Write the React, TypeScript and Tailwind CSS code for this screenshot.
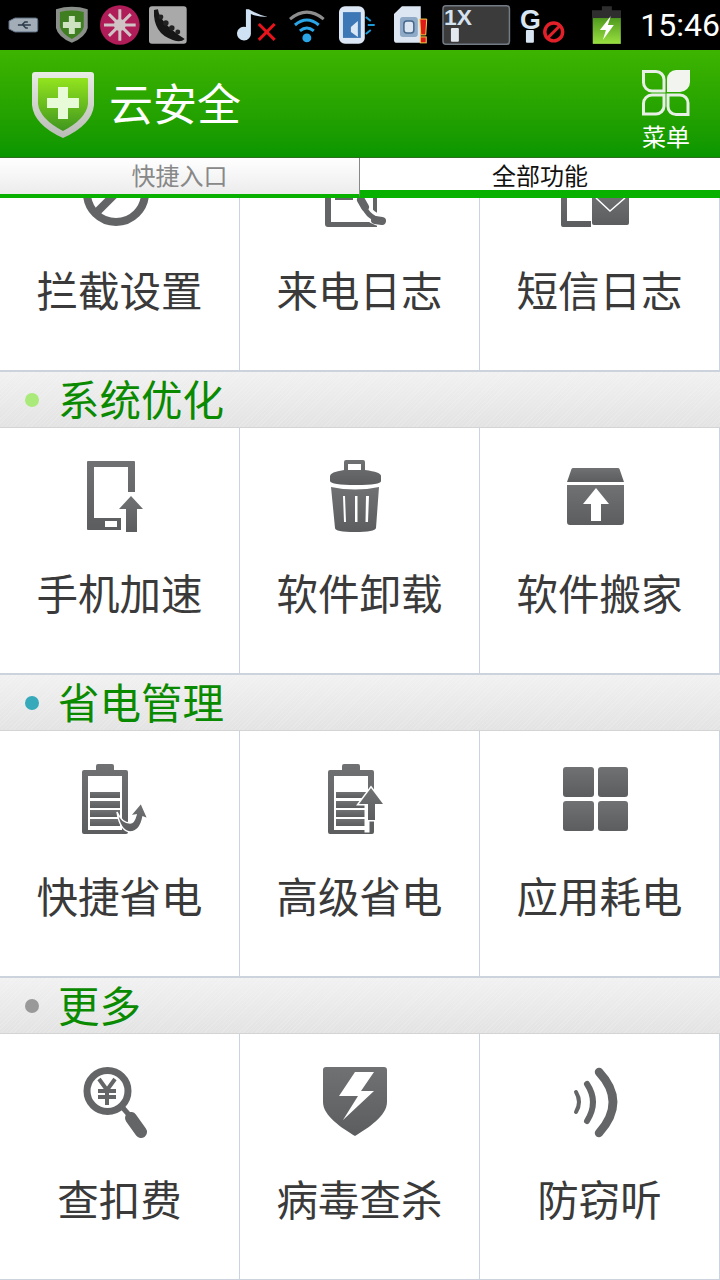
import React from "react";

const cjk = "font-['Noto_Sans_CJK_SC','Liberation_Sans',sans-serif]";

const Grad = ({ id }: { id: string }) => (
  <defs>
    <linearGradient id={id} x1="0" y1="0" x2="0" y2="1">
      <stop offset="0" stopColor="#6f7173" />
      <stop offset="1" stopColor="#5b5d5f" />
    </linearGradient>
  </defs>
);

const Icon = ({ id, children }: { id: string; children: React.ReactNode }) => (
  <svg width="80" height="80" viewBox="0 0 80 80" className="block">
    <Grad id={id} />
    <g fill={`url(#${id})`}>{children}</g>
  </svg>
);

const BlockIcon = () => (
  <svg width="80" height="80" viewBox="0 0 80 80" className="block">
    <circle cx="36" cy="38" r="29" fill="none" stroke="#626466" strokeWidth="8" />
    <path d="M56 18L16 58" stroke="#626466" strokeWidth="8" />
  </svg>
);

const CallLogIcon = () => (
  <svg width="80" height="80" viewBox="0 0 80 80" className="block">
    <path fill="#626466" fillRule="evenodd" d="M8 20h46q3 0 3 3v49H8q-3 0-3-3V23q0-3 3-3zM11 26v41h42V26z" />
    <rect x="15" y="38" width="18" height="7" fill="#626466" />
    <g fill="none" strokeLinecap="round">
      <path d="M42 45Q45 62 62 66" stroke="#fff" strokeWidth="12" />
      <path d="M42 45Q45 62 62 66" stroke="#626466" strokeWidth="5" />
      <path d="M41 45l4 7M55 65l7 1" stroke="#626466" strokeWidth="8" />
    </g>
  </svg>
);

const SmsLogIcon = () => (
  <Icon id="ic-sms">
    <path fillRule="evenodd" d="M3 20h30v52H3q-2 0-2-2V22q0-2 2-2zM7 30v36h26V30z" />
    <rect x="31" y="38" width="39" height="35" fill="#fff" />
    <rect x="32" y="38" width="37" height="32" rx="2" />
    <path d="M36 43l14 13 15-13" fill="none" stroke="#fff" strokeWidth="1.5" />
  </Icon>
);

const PhoneUpIcon = () => (
  <Icon id="ic-phone">
    <path fillRule="evenodd" d="M8 3h46q1 0 1 1v67q0 1-1 1H8q-1 0-1-1V4q0-1 1-1zM14 9v51h34V9zM25 63v6h12v-6z" />
    <rect x="41" y="34" width="16" height="40" fill="#fff" />
    <path d="M46 74V51h-7l12-13 12 13h-6v23z" />
  </Icon>
);

const TrashIcon = () => (
  <Icon id="ic-trash">
    <path fillRule="evenodd" d="M26 2h17q2 0 2 2v8q16 2 16 6v5q0 4-25 4T10 23v-5q0-4 14-6V4q0-2 2-2zM28 6v6h13V6z" />
    <path
      fillRule="evenodd"
      d="M11 29q24 5 48 0l-3 41q-1 4-21 4T15 70zM23 38l1 26h2l-1-26zM35 38v26h2.500V38zM46 38l-.500 26h2.500l1-26z"
    />
  </Icon>
);

const BoxUpIcon = () => (
  <Icon id="ic-box">
    <path d="M13 10h45q1 0 1.500 1L64 24H7l4.500-13q.500-1 1.500-1z" />
    <path fillRule="evenodd" d="M7 27h57v37q0 3-3 3H10q-3 0-3-3zM36 30L23 46h8v17h10V46h8z" />
  </Icon>
);

const BatteryBase = ({ x }: { x: number }) => (
  <>
    <path
      fillRule="evenodd"
      transform={`translate(${x} 0)`}
      d="M16 9V5q0-2 2-2h14q2 0 2 2v4h12q2 0 2 2v60q0 2-2 2H4q-2 0-2-2V11q0-2 2-2zM8 15v54h34V15z"
    />
    {[31, 40, 49, 58].map((y) => (
      <rect key={y} x={x + 10} y={y} width="30" height={y === 31 ? 6 : 7} />
    ))}
  </>
);

const BatterySwirlIcon = () => (
  <Icon id="ic-bat1">
    <BatteryBase x={0} />
    <path
      d="M37 51Q40 70 50 71Q60 71 63 56L68 58L61 42L50 55L56 54Q54 62 50 62Q42 62 37 51z"
      stroke="#fff"
      strokeWidth="1.500"
    />
  </Icon>
);

const BatteryUpIcon = () => (
  <Icon id="ic-bat2">
    <BatteryBase x={6} />
    <path d="M48 70V59h7v-16h8L51 27 39 43h7v27z" fill="#fff" stroke="#fff" strokeWidth="3" />
    <path d="M48 59V43h-9l12-16 12 16h-8v16z" />
  </Icon>
);

const GridIcon = () => (
  <Icon id="ic-grid">
    <rect x="3" y="6" width="31" height="30" rx="3" />
    <rect x="38" y="6" width="30" height="30" rx="3" />
    <rect x="3" y="40" width="31" height="30" rx="3" />
    <rect x="38" y="40" width="30" height="30" rx="3" />
  </Icon>
);

const MagnifierIcon = () => (
  <svg width="80" height="80" viewBox="0 0 80 80" className="block">
    <g fill="none" stroke="#636567">
      <circle cx="27.500" cy="27" r="20.500" strokeWidth="7" />
      <path d="M43 44l7 8" strokeWidth="5" />
      <path d="M51 54l10 14" strokeWidth="12" strokeLinecap="round" />
      <path d="M19 15l8 11 8-11M27 26v15M18 27h18M18 33h18" strokeWidth="4" />
    </g>
  </svg>
);

const ShieldIcon = () => (
  <Icon id="ic-shield">
    <path
      fillRule="evenodd"
      d="M6 3h58q3 0 3 3v32c0 14-19 26-32 34C22 64 3 52 3 38V6q0-3 3-3zM54 8H35L19 32h19L23 56l31-29H41z"
    />
  </Icon>
);

const SoundIcon = () => (
  <svg width="80" height="80" viewBox="0 0 80 80" className="block">
    <g fill="none" stroke="#636567" strokeLinecap="round">
      <path d="M39 8Q67 38 39 69" strokeWidth="8.500" />
      <path d="M27 20Q39 38 27 57" strokeWidth="6" />
      <path d="M16 28Q22 38 16 48" strokeWidth="4" />
    </g>
  </svg>
);

const Cell = ({ label, icon }: { label: string; icon: React.ReactNode }) => (
  <div className="h-[245px] border-r border-[#c9d4e2] bg-white flex flex-col items-center pt-[30px]">
    <div className="w-20 h-20">{icon}</div>
    <div className="mt-[26px] text-[41.500px] leading-[56px] text-[#3a3a3a]">{label}</div>
  </div>
);

const Section = ({ title, dot }: { title: string; dot: string }) => (
  <div className="h-[58px] border-t-2 border-b border-t-[#cdd3dc] border-b-[#d4d4d4] bg-[repeating-linear-gradient(135deg,rgba(255,255,255,0.14)_0_1px,transparent_1px_3px),linear-gradient(#f1f1f1,#e3e3e3)] flex items-center pl-[25px]">
    <span className={`w-[14px] h-[14px] rounded-full shrink-0 ${dot}`} />
    <span className="ml-[19px] mb-[3px] text-[41.500px] leading-[54px] text-[#0a8a00]">{title}</span>
  </div>
);

const StatusBar = () => (
  <div className="h-[50px] bg-black flex items-start shrink-0 overflow-hidden">
    {/* usb */}
    <svg width="32" height="18" viewBox="0 0 32 18" className="ml-[8px] mt-[16px]">
      <path d="M1 5l6-3h21q2 0 2 2v10q0 2-2 2H7l-6-3z" fill="#a3adb8" stroke="#5f7186" />
      <path d="M10 9h13M14 9l3-3h3M15 9l3 3h2" stroke="#2c3a4a" strokeWidth="1.400" fill="none" />
    </svg>
    {/* green shield */}
    <svg width="36" height="38" viewBox="0 0 36 38" className="ml-[14px] mt-[6px]">
      <path d="M2 3q16-5 32 0v19q-2 9-16 15Q4 31 2 22z" fill="#8a8f8a" />
      <path d="M6 6q12-3 24 0v15q-2 7-12 12Q8 28 6 21z" fill="#3f7f22" />
      <path d="M15 10h6v6h6v6h-6v6h-6v-6H9v-6h6z" fill="#cfe3c2" />
    </svg>
    {/* pink circle */}
    <svg width="42" height="42" viewBox="0 0 42 42" className="ml-[10px] mt-[4px]">
      <circle cx="21" cy="21" r="20" fill="#b01c58" />
      <g stroke="#cfc3c6" strokeWidth="3">
        <path d="M21 5v32M5 21h32M10 10l22 22M32 10L10 32" />
      </g>
      <circle cx="21" cy="21" r="6" fill="#cfc3c6" />
    </svg>
    {/* peapod */}
    <svg width="38" height="38" viewBox="0 0 38 38" className="ml-[8px] mt-[6px]">
      <rect width="38" height="38" rx="3" fill="#a9a9a9" />
      <path d="M5 4l4-1q2 14 27 30-4 4-12 1Q4 28 5 4z" fill="#161616" />
      <g fill="#222">
        <circle cx="12" cy="11" r="2.500" />
        <circle cx="17" cy="17" r="2.800" />
        <circle cx="23" cy="22" r="2.800" />
        <circle cx="29" cy="26" r="2.500" />
      </g>
    </svg>
    {/* muted note */}
    <svg width="42" height="36" viewBox="0 0 42 36" className="ml-[49px] mt-[7px]">
      <path d="M15 2v24a7 7 0 1 1-5-6V2h3q10 6 19 8-10 0-17-3z" fill="#cfe2f4" />
      <path d="M23 17l16 16M39 17L23 33" stroke="#e8141c" strokeWidth="3" />
    </svg>
    {/* wifi */}
    <svg width="38" height="36" viewBox="0 0 38 36" className="ml-[11px] mt-[8px]">
      <g fill="none" strokeWidth="3">
        <path d="M2 11Q19-3 36 11" stroke="#8d8d8d" />
        <path d="M7 17Q19 7 31 17" stroke="#2aa6e6" />
        <path d="M12 23Q19 17 26 23" stroke="#2aa6e6" />
      </g>
      <circle cx="19" cy="30" r="4.500" fill="#2aa6e6" />
    </svg>
    {/* phone vibrate */}
    <svg width="44" height="40" viewBox="0 0 44 40" className="ml-[13px] mt-[6px]">
      <rect x="0" y="0" width="26" height="38" rx="6" fill="#dbe7f4" />
      <rect x="4" y="6" width="18" height="26" fill="#3d77b6" />
      <path d="M12 21l7-6v16l-7-5z" fill="#dbe7f4" />
      <path d="M29 19h7M27 11l5 4M27 28l5-4" stroke="#1d9bd8" strokeWidth="2" />
    </svg>
    {/* sim */}
    <svg width="36" height="38" viewBox="0 0 36 38" className="ml-[11px] mt-[6px]">
      <path d="M8 0h19v37H3q-3 0-3-3V8z" fill="#dbe6f2" />
      <rect x="6" y="11" width="18" height="20" rx="3" fill="#8eaac6" />
      <rect x="10" y="15" width="10" height="12" rx="3" fill="#dbe6f2" stroke="#46688c" strokeWidth="1.500" />
      <path d="M26 13h7l-1 16h-5z" fill="#e01a1a" stroke="#f3d24a" />
      <rect x="26.500" y="31" width="6" height="6" fill="#e01a1a" stroke="#f3d24a" />
    </svg>
    {/* 1x */}
    <svg width="70" height="42" viewBox="0 0 70 42" className="ml-[13px] mt-[4px]">
      <rect x="1" y="1.500" width="67" height="39" rx="3" fill="#3b3b3b" stroke="#737b85" strokeWidth="1.500" />
      <text x="2" y="21" fontFamily="Liberation Sans" fontWeight="700" fontSize="23" fill="#d5e2f0">
        1X
      </text>
      <rect x="9" y="24" width="8" height="14" rx="1" fill="#e4e9ef" />
    </svg>
    {/* g */}
    <svg width="46" height="42" viewBox="0 0 46 42" className="ml-[7px] mt-[3px]">
      <text x="1" y="26" fontFamily="Liberation Sans" fontWeight="700" fontSize="27" fill="#d8e6f4">
        G
      </text>
      <rect x="7" y="27" width="8" height="13" rx="1" fill="#d8e6f4" />
      <circle cx="35" cy="29" r="9" fill="none" stroke="#e2202a" strokeWidth="3.500" />
      <path d="M29 35l12-12" stroke="#e2202a" strokeWidth="3" />
    </svg>
    {/* battery */}
    <svg width="30" height="38" viewBox="0 0 30 38" className="ml-[27px] mt-[6px]">
      <defs>
        <linearGradient id="st-bat" x1="0" y1="0" x2="0" y2="1">
          <stop offset="0" stopColor="#4f9a1e" />
          <stop offset="1" stopColor="#9ae040" />
        </linearGradient>
      </defs>
      <path d="M10 0h10v4h10v34H0V4h10z" fill="#2e2e2e" />
      <rect x="1" y="12" width="28" height="26" fill="url(#st-bat)" />
      <path d="M19 10L8 24h6l-3 10 11-15h-6z" fill="#fff" />
    </svg>
    <span className="ml-[19px] mt-[5px] font-['Roboto',sans-serif] text-[32px] leading-[40px] text-white whitespace-nowrap">
      15:46
    </span>
  </div>
);

const AppBar = () => (
  <div className="h-[108px] shrink-0 bg-gradient-to-b from-[#3db400] to-[#089600] border-b border-[#2f6f22] flex items-start pl-[32px] pr-[30px]">
    <svg width="62" height="66" viewBox="0 0 62 66" className="mt-[22px]">
      <defs>
        <linearGradient id="lg-rim" x1="0" y1="0" x2="0" y2="1">
          <stop offset="0" stopColor="#e8ece4" />
          <stop offset="1" stopColor="#b9bcb6" />
        </linearGradient>
        <linearGradient id="lg-in" x1="0" y1="0" x2="0" y2="1">
          <stop offset="0" stopColor="#93e41e" />
          <stop offset="1" stopColor="#3f961e" />
        </linearGradient>
      </defs>
      <path d="M3 0h56q3 0 3 3v30q-2 20-31 33Q2 53 0 33V3q0-3 3-3z" fill="url(#lg-rim)" />
      <path d="M7 6h48q1 0 1 1v25q-2 15-25 27Q8 47 6 32V7q0-1 1-1z" fill="url(#lg-in)" />
      <path d="M26 15h10v11h11v10H36v11H26V36H15V26h11z" fill="#e8fbd8" />
    </svg>
    <div className="ml-[15px] mt-[21px] text-[44px] leading-[62px] text-white">云安全</div>
    <div className="ml-auto flex flex-col items-center mt-[20px]">
      <svg width="48" height="46" viewBox="0 0 48 46" className="block">
        <g fill="none" stroke="#e8efe6" strokeWidth="3">
          <path d="M1.500 1.500H14a8 8 0 0 1 8 8V21H10a8.500 8.500 0 0 1-8.500-8.500z" />
          <path d="M10 25H22V36a8 8 0 0 1-8 8H1.500V33.500a8.500 8.500 0 0 1 8.500-8.500z" />
          <path d="M26 25H38a8 8 0 0 1 8 8V44.500H34a8 8 0 0 1-8-8z" />
        </g>
        <path d="M34 0H48V12a10 10 0 0 1-10 10H25V9a9 9 0 0 1 9-9z" fill="#f2f4f0" />
      </svg>
      <span className="mt-[4px] text-[24px] leading-[32px] text-white">菜单</span>
    </div>
  </div>
);

const Tabs = () => (
  <div className="h-[40px] shrink-0 grid grid-cols-2 grid-rows-[40px] text-[24px] leading-[34px] z-10">
    <div className="bg-gradient-to-b from-white to-[#ececec] border-r border-[#888] border-b-4 border-b-[#08b000] text-center text-[#888]">
      快捷入口
    </div>
    <div className="bg-white border-b-8 border-[#08b000] text-center text-[#111]">全部功能</div>
  </div>
);

const Row = ({ children }: { children: React.ReactNode }) => <div className="grid grid-cols-3">{children}</div>;

export default function App() {
  return (
    <div className={`w-[720px] h-[1280px] overflow-hidden flex flex-col bg-white ${cjk}`}>
      <StatusBar />
      <AppBar />
      <Tabs />
      <div className="flex-1 overflow-hidden">
        <div className="-mt-[73px]">
          <Row>
            <Cell label="拦截设置" icon={<BlockIcon />} />
            <Cell label="来电日志" icon={<CallLogIcon />} />
            <Cell label="短信日志" icon={<SmsLogIcon />} />
          </Row>
          <Section title="系统优化" dot="bg-[#a9ea7a]" />
          <Row>
            <Cell label="手机加速" icon={<PhoneUpIcon />} />
            <Cell label="软件卸载" icon={<TrashIcon />} />
            <Cell label="软件搬家" icon={<BoxUpIcon />} />
          </Row>
          <Section title="省电管理" dot="bg-[#36a9bb]" />
          <Row>
            <Cell label="快捷省电" icon={<BatterySwirlIcon />} />
            <Cell label="高级省电" icon={<BatteryUpIcon />} />
            <Cell label="应用耗电" icon={<GridIcon />} />
          </Row>
          <Section title="更多" dot="bg-[#999]" />
          <Row>
            <Cell label="查扣费" icon={<MagnifierIcon />} />
            <Cell label="病毒查杀" icon={<ShieldIcon />} />
            <Cell label="防窃听" icon={<SoundIcon />} />
          </Row>
          <div className="h-[2px] bg-[#cdd3dc]" />
        </div>
      </div>
    </div>
  );
}
